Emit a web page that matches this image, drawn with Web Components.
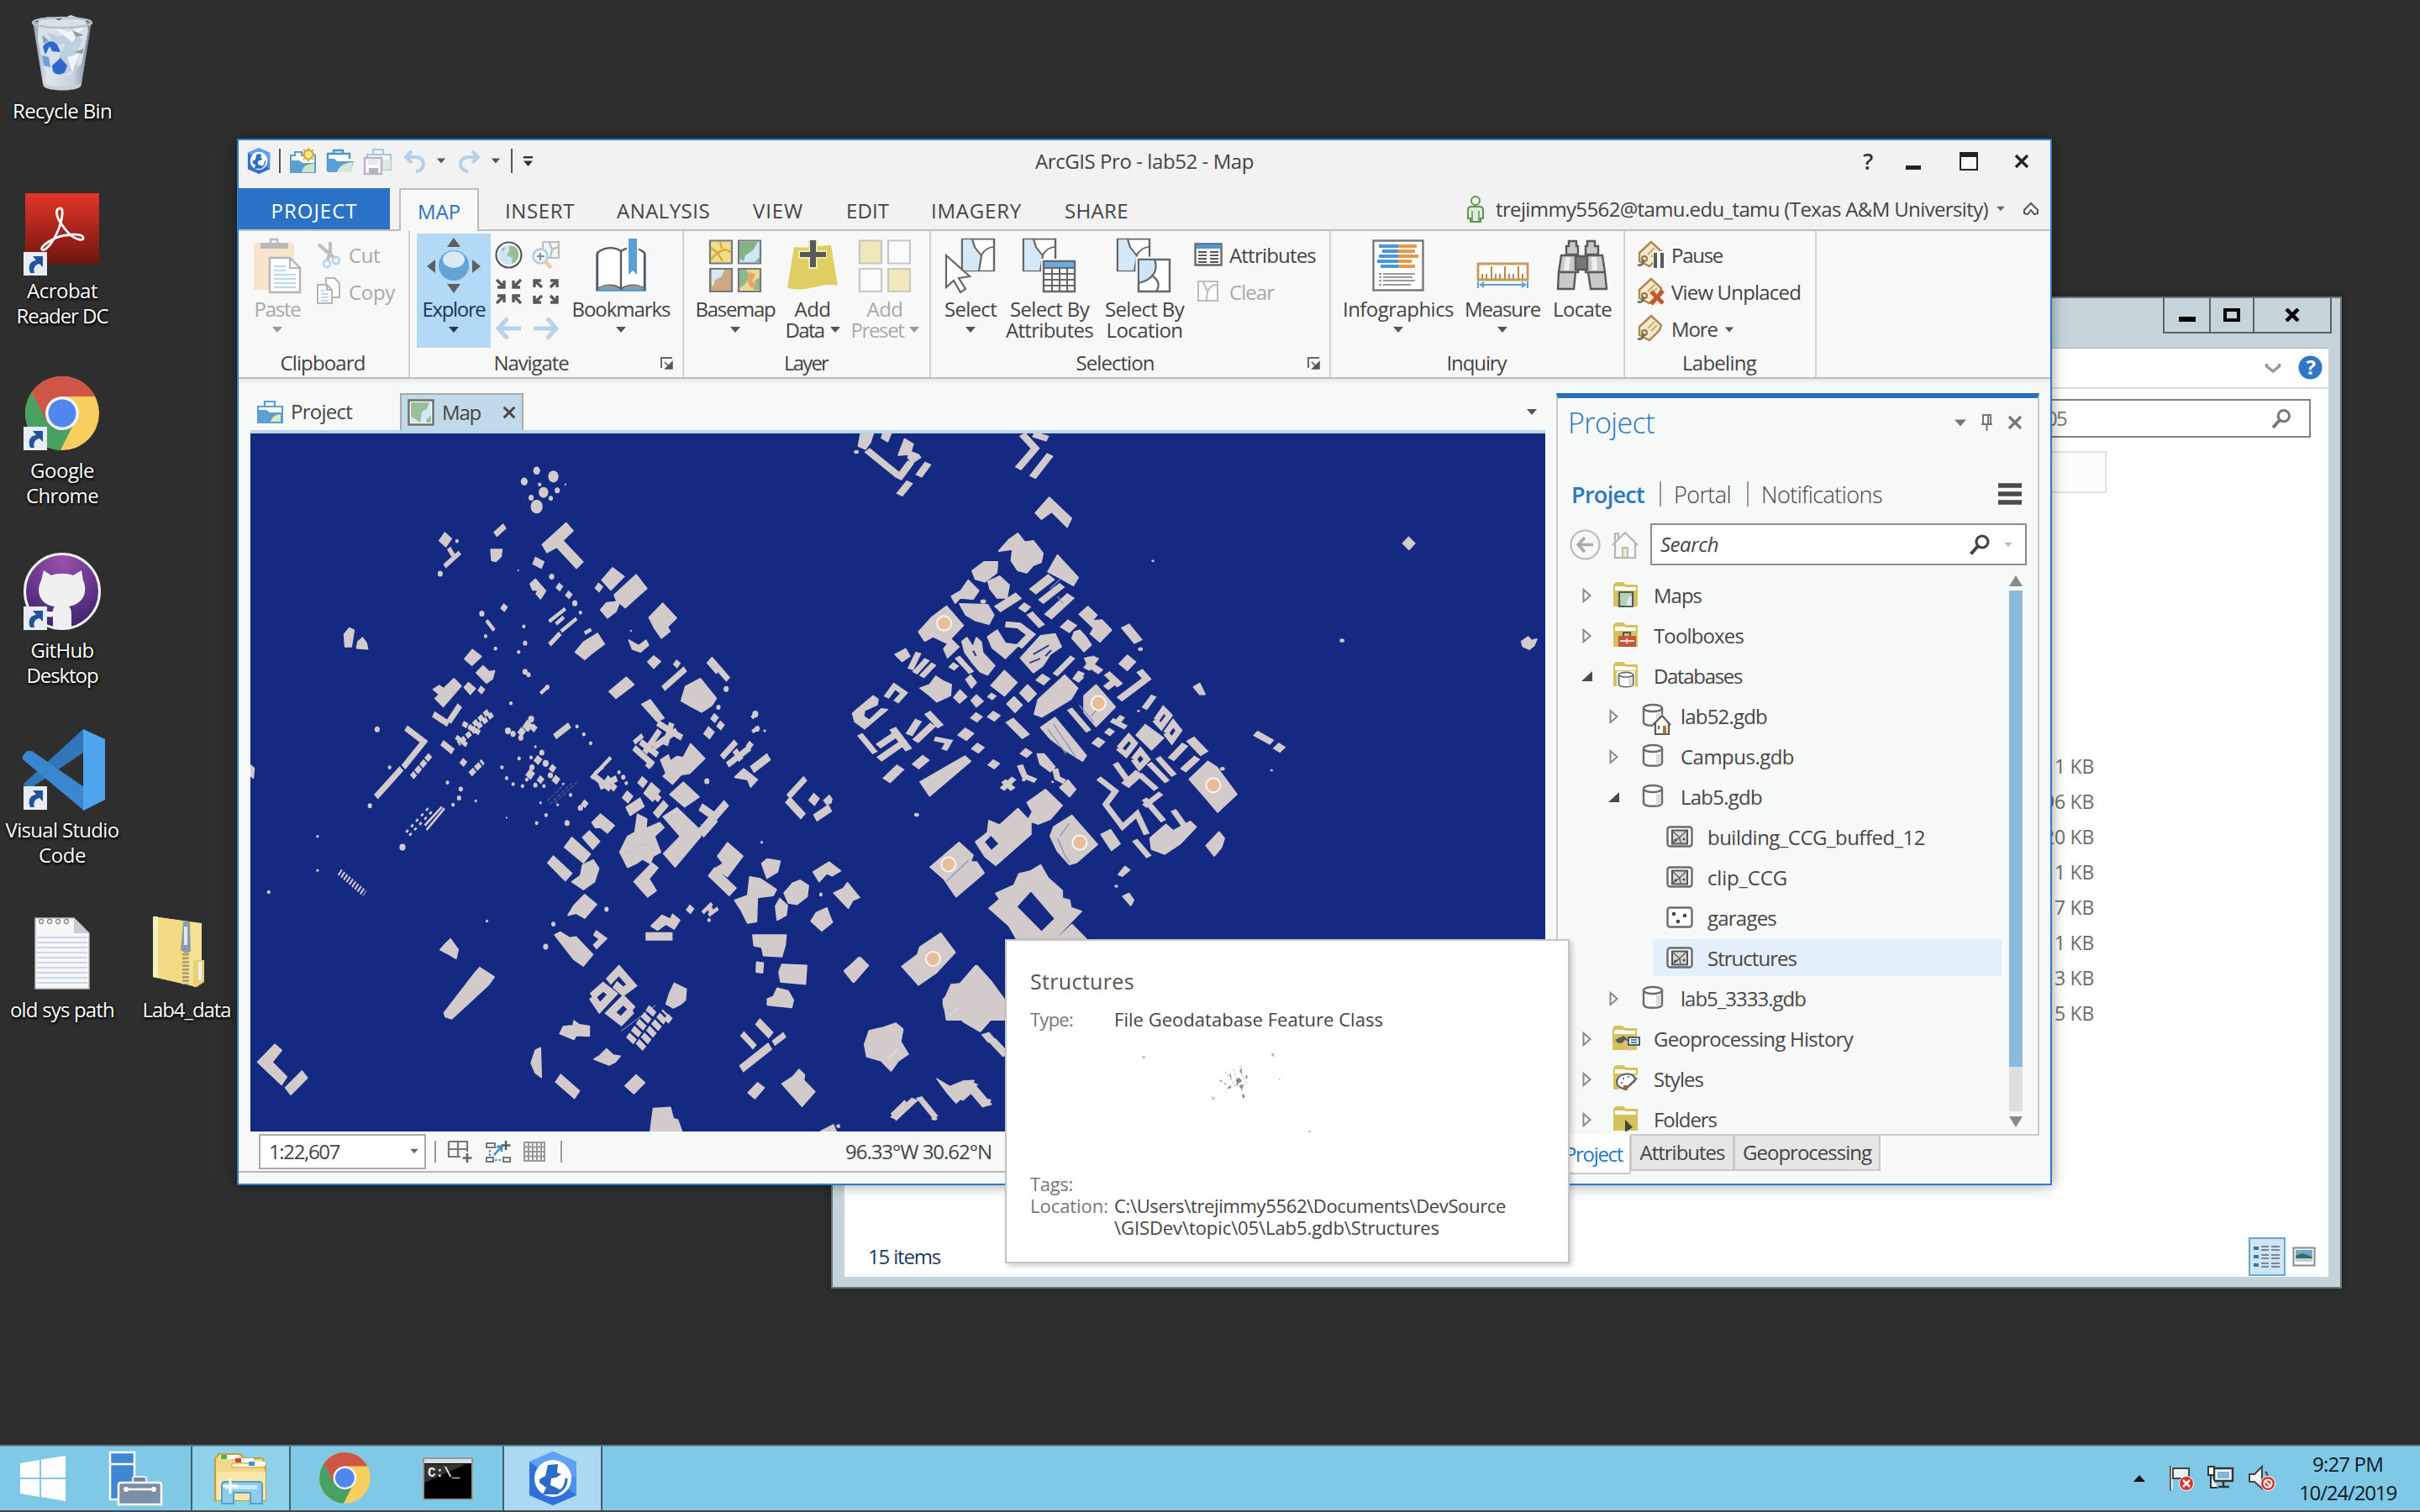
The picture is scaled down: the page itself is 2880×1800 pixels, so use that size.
<!DOCTYPE html>
<html lang="en">
<head>
<meta charset="utf-8">
<title>Desktop</title>
<style>
html,body{margin:0;padding:0}
body{width:2880px;height:1800px;overflow:hidden;background:#2e2e2e;font-family:"Open Sans","Noto Sans",sans-serif;font-size:24px;color:#444}
</style>
</head>
<body>
<desk-top></desk-top>
<script>
const BASE = `*{box-sizing:border-box}:host{display:block;line-height:1}.r{display:flex;align-items:center}svg{display:block}`;
const define = (name, css, html, after) => customElements.define(name, class extends HTMLElement {
  connectedCallback() {
    if (this.shadowRoot) return;
    const root = this.attachShadow({ mode: 'open' });
    root.innerHTML = `<style>${BASE}${css}</style>` + (typeof html === 'function' ? html(this) : html);
    if (after) after(this, root);
  }
});

/* ---------- icons ---------- */
const folder = '<path d="M1 29V3l3-3h9l3 3h14v26z" fill="#d6c25a"/><path d="M3 5h11l3 1h11v4H3z" fill="#fdfdf6"/>';
const chrome = id => `<clipPath id="k${id}"><circle cx="44" cy="44" r="44"/></clipPath><g clip-path="url(#k${id})"><rect width="88" height="88" fill="#f8cf5e"/><path d="M0 0H88V24H44L25 54 8 20z" fill="#cf5546"/><path d="M0 12L8 20 26 54 44 62 57 58 42 88H0z" fill="#48a162"/></g><circle cx="44" cy="44" r="20" fill="#f3f3f3"/><circle cx="44" cy="44" r="16.5" fill="#5087ee"/>`;
const hexGlobe = '<path d="M30 0L58 12V52L30 64 2 52V12z" fill="#4a90ec"/><path d="M2 12L30 32 58 52 30 64 2 52z" fill="#2f70dc"/><path d="M30 0L58 12V30L30 32 2 12z" fill="#5fa2f2"/><circle cx="30" cy="32" r="22" fill="#fff"/><path d="M24 16l12-1-1 10 5 2-6 4-6 1-1 8 11 5-2 6H18l4-8-8-6v-4l7-4z" fill="#2c6bc6"/><path d="M46 32c0 8-4 14-11 17" stroke="#2c6bc6" stroke-width="3" fill="none"/>';
const parcel = '<path d="M1 1h38v54H1z" fill="#fff" stroke="#666" stroke-width="2.4"/><path d="M2 2h11l3 14 8 14-3 24H2z" fill="#d5e8f7"/><path d="M13 1l3 14 8 14-3 26M24 28c3-8 8-13 15-14" fill="none" stroke="#666" stroke-width="2.2"/>';
const tag = '<path d="M3 15L17 2l12 11-2 6-12 12-12-6z" fill="#f7e9c6" stroke="#a98a55" stroke-width="2.4"/><path d="M13 17l8-8M17 20l7-7" stroke="#c9ad78" stroke-width="2"/><circle cx="9" cy="22" r="3" fill="none" stroke="#8a7449" stroke-width="2"/><path d="M8 23c0 6-4 8-7 6" fill="none" stroke="#666" stroke-width="2.4"/>';
const cyl = '<path d="M2 6v17c0 5 22 5 22 0V6" fill="#fafafa" stroke="#6b6b6b" stroke-width="2.4"/><path d="M17 12h6v12l-6 2z" fill="#ddd"/><ellipse cx="13" cy="6" rx="11" ry="4" fill="#fff" stroke="#6b6b6b" stroke-width="2.4"/>';
const arrIn = '<path d="M2 2l9 9M3 11h8V3M31 2l-9 9M30 11h-8V3M2 30l9-9M3 21h8v8M31 30l-9-9M30 21h-8v8" fill="none" stroke="#58595b" stroke-width="3.4"/>';
const arrOut = '<path d="M12 11L3 3M3 11V3h8M22 11l8-8M22 3h8v8M12 21l-9 8M3 21v8h8M22 21l8 8M30 21v8h-8" fill="none" stroke="#58595b" stroke-width="3.4"/>';
const poly = '<rect x="1.5" y="1.5" width="29" height="23" rx="3" fill="#fff" stroke="#6b6b6b" stroke-width="2.4"/><path d="M7 5.500h18v16H7z" fill="#d8d8d8" stroke="#555" stroke-width="2.2"/><path d="M8 7l8 7 8-8M16 14l1 7M8 20l8-6" stroke="#666" stroke-width="1.6" fill="none"/><circle cx="11" cy="17" r="1.500" fill="#444"/><circle cx="21" cy="16" r="1.500" fill="#444"/>';
const ICONS = {
  logo: [28, 31, `<g transform="scale(.47 .485)">${hexGlobe}</g>`],
  newp: [31, 30, '<path d="M1 8h5V4h8v4h16v20H1z" fill="#fff" stroke="#5a9ccc" stroke-width="2"/><path d="M1 14h10l4 3h15v12H1z" fill="#5ba0d4"/><path d="M14 28c2-8 7-10 15-10v10z" fill="#cfe3c6"/><circle cx="22" cy="7" r="5.500" fill="#fae58c" stroke="#d1a929" stroke-width="2"/><path d="M22-1v4M22 12v4M14 7h4M27 7h4M16 1l3 3M28 1l-3 3M16 13l3-3M28 13l-3-3" stroke="#d1a929" stroke-width="1.500"/>'],
  openp: [33, 29, '<path d="M1 27V6h26v6" fill="#fff" stroke="#4c94c9" stroke-width="2.4"/><path d="M8 6V2h11v4" fill="none" stroke="#4c94c9" stroke-width="2.4"/><path d="M1 12h8l3 3h20l-4 13H1z" fill="#5ba0d4"/><path d="M12 28c3-8 8-11 19-12l-3 12z" fill="#d6e8d8"/>'],
  savep: [34, 32, '<g opacity=".5"><path d="M4 8h28v18H4z" fill="#fff" stroke="#5ba0d4" stroke-width="2"/><path d="M11 8V2h12v6" fill="none" stroke="#5ba0d4" stroke-width="2"/><path d="M22 14h10v12H22z" fill="#c9dfd0"/><path d="M1 12h20v19H1z" fill="#fff" stroke="#8e6fb0" stroke-width="2.4"/><path d="M5 13h12v7H5z" fill="#e6dcf0"/><path d="M6 24h11v7H6z" fill="#777"/></g>'],
  undo: [27, 28, '<path d="M10 2L3 9l7 7M3 9h12c6 0 9 4 9 8s-3 9-9 9" fill="none" stroke="#b5d0e8" stroke-width="4"/>'],
  redo: [27, 28, '<path d="M17 2l7 7-7 7M24 9H12c-6 0-9 4-9 8s3 9 9 9" fill="none" stroke="#b5d0e8" stroke-width="4"/>'],
  dn: [12, 7, '<path d="M0 0h12L6 7z" fill="currentColor"/>'],
  qat: [11, 12, '<path d="M0 0h11v2.500H0zM0 5.500h11L5.500 12z" fill="#333"/>'],
  min: [18, 22, '<path d="M0 16h18v5H0z" fill="#222"/>'],
  max: [22, 22, '<path d="M1 1h20v20H1z" fill="#f8f8f8" stroke="#222" stroke-width="2"/><path d="M0 0h22v6H0z" fill="#222"/>'],
  x: [18, 18, '<path d="M2 2l14 14M16 2L2 16" stroke="currentColor" stroke-width="3.200"/>'],
  user: [22, 32, '<circle cx="11" cy="6" r="5" fill="#eef6ea" stroke="#5d9455" stroke-width="2"/><path d="M2 17q0-4 4-4h10q4 0 4 4v10h-3v4H5v-4H2z" fill="#dcecd6" stroke="#5d9455" stroke-width="2"/><path d="M7 18v12M15 18v12" stroke="#5d9455" stroke-width="1.500"/>'],
  collapse: [20, 17, '<path d="M2 10L10 2l8 8v4l-4 1-4-5-4 5-4-1z" fill="#fff" stroke="#555" stroke-width="2"/>'],
  paste: [58, 66, '<rect x="1" y="6" width="48" height="56" rx="3" fill="#f8e4cd"/><path d="M9 6h33v7H9z" fill="#b9b9b9"/><path d="M21 6V2h8v4" fill="none" stroke="#b9b9b9" stroke-width="2.500"/><path d="M20 24h24l12 12v29H20z" fill="#fff" stroke="#b5b5b5" stroke-width="2.400"/><path d="M44 24v12h12" fill="none" stroke="#b5b5b5" stroke-width="2"/><path d="M25 34h14M25 39h14M25 44h26M25 49h26M25 54h26M25 59h26" stroke="#b9d7ee" stroke-width="2"/>'],
  cut: [28, 32, '<path d="M2 4L21 20M16 1V14L12 24" stroke="#bdbdbd" stroke-width="4" fill="none"/><circle cx="23" cy="23" r="4" fill="none" stroke="#b5d3ea" stroke-width="2.600"/><circle cx="12" cy="27" r="4" fill="none" stroke="#b5d3ea" stroke-width="2.600"/>'],
  copy: [29, 33, '<path d="M11 1h10l6 6v17H11z" fill="#fff" stroke="#b5b5b5" stroke-width="2"/><path d="M1 9h11l6 6v16H1z" fill="#fff" stroke="#b5b5b5" stroke-width="2"/><path d="M12 9v6h6" fill="none" stroke="#b5b5b5" stroke-width="2"/><path d="M5 16h4M5 20h9M5 24h9M5 28h9" stroke="#b9d7ee" stroke-width="1.800"/>'],
  explore: [66, 66, '<path d="M33 0l8 11H25zM33 66l8-11H25zM1 34l10-8v16zM65 34l-10-8v16z" fill="#5f5f61"/><circle cx="33" cy="33" r="18" fill="#64a3d5"/><ellipse cx="33" cy="26" rx="13" ry="10" fill="#d9e9f6"/>'],
  globe: [33, 33, '<circle cx="16.500" cy="16.500" r="15" fill="#fff" stroke="#58595b" stroke-width="2.200"/><circle cx="16.500" cy="16.500" r="12" fill="#cde5f5"/><path d="M17 6c7-2 12 4 11 12-1 5-5 9-8 8l1-6-7-3 3-5zM7 10l5-3-1 5z" fill="#98bf96"/>'],
  zoomsel: [33, 33, '<path d="M13 1h19v19H18M13 1v8M21 2l3 8 7-3M24 10l-2 9" fill="#f2f2f2" stroke="#bcbcbc" stroke-width="2.200"/><circle cx="10" cy="18" r="8.500" fill="#fafafa" stroke="#a9cfea" stroke-width="2.600"/><path d="M6 18h9M10 14v9" stroke="#8a8a8a" stroke-width="2"/><path d="M16 24l7 8" stroke="#efc9a2" stroke-width="4.400"/>'],
  arrin: [33, 33, arrIn], arrout: [33, 33, arrOut],
  left: [33, 28, '<path d="M31 14H4M15 2L4 14l11 12" fill="none" stroke="#b7d2ea" stroke-width="5"/>'],
  right: [33, 28, '<path d="M2 14h27M18 2l11 12-11 12" fill="none" stroke="#b7d2ea" stroke-width="5"/>'],
  book: [62, 64, '<path d="M1 18h4v42h52V18h4v45H1z" fill="#5ba0d4"/><path d="M3 17C12 9 24 10 31 15V60C22 54 12 55 3 60zM31 15C38 10 50 9 59 17V60C50 54 40 55 31 60" fill="#fff" stroke="#58595b" stroke-width="2.400"/><path d="M3 60C12 53 24 55 31 61 38 55 50 53 59 60z" fill="#999"/><path d="M38 8h14v14H38z" fill="#f8f8f8"/><path d="M40 0h10v43l-5-5-5 5z" fill="#5ba0d4"/>'],
  basemap: [64, 63, '<g stroke="#77787a" stroke-width="2.200"><path d="M2 1.500h26v27H2z" fill="#f0dd8a"/><path d="M36 1.500h26v27H36z" fill="#cfe6f6"/><path d="M2 35h26v27H2z" fill="#cba981"/><path d="M36 35h26v27H36z" fill="#f0d795"/></g><path d="M37 3h22l-6 10-9 6-2 7-5-3zM55 27l6-6v6z" fill="#86b383"/><path d="M3 10l8 6 6 10M3 24l8-8 8-4 8 3M14 3l2 8" stroke="#d8a53a" stroke-width="2.200" fill="none"/><path d="M4 36h15l-3 8-8 4-2 8-2-2z" fill="#d5e8f7"/><path d="M37 36h8l4 8-6 10-6 4zM54 60l2-12 5-2v14z" fill="#8cb98a"/><path d="M48 38l8 4-4 8 6 3-6 6-6-8z" fill="#e9a56f"/>'],
  adddata: [60, 60, '<path d="M8 8c12 2 30-2 44-2l8 48c-14-3-26 2-38 4-8 1-16 1-22-2z" fill="#dfcf62"/><path d="M25 0h11v12h11v10H36v12H25V22H13V12h12z" fill="#f1eaa9"/><path d="M27 0h7v32h-7zM15 14h31v6H15z" fill="#58595b"/>'],
  preset: [64, 63, '<g stroke="#c6c6c6" stroke-width="2.200"><path d="M2 1.500h26v27H2zM36 35h26v27H36z" fill="#f0e8b9"/><path d="M36 1.500h26v27H36zM2 35h26v27H2z" fill="#fbfbfb"/></g>'],
  select: [62, 66, `<g transform="translate(20 1) scale(1 .7)">${parcel}</g><path d="M2 21v38l9-8 8 14 6-4-8-13 13-2z" fill="#fff" stroke="#666" stroke-width="2.200"/>`],
  selattr: [64, 66, `<g transform="translate(0 1) scale(1 .7)">${parcel}</g><path d="M24 27h39v38H24z" fill="#fff" stroke="#f8f8f8" stroke-width="4"/><path d="M25 28h37v36H25z" fill="#fff" stroke="#666" stroke-width="2.400"/><path d="M26 29h35v6H26z" fill="#6aaae0"/><path d="M25 36h37M25 43h37M25 50h37M25 57h37M35 36v28M44 36v28M53 36v28" stroke="#666" stroke-width="2"/>`],
  selloc: [66, 66, `<g transform="translate(0 1) scale(1 .7)">${parcel}</g><path d="M25 25h39v40H25z" fill="#fff" stroke="#f8f8f8" stroke-width="5"/><path d="M26 26h37v38H26z" fill="#fff" stroke="#666" stroke-width="2.400"/><path d="M27 27h18c4 12 0 22-18 26z" fill="#cfe4f6"/><path d="M45 26c5 13-2 24-19 28M43 46c6 4 9 10 4 18" fill="none" stroke="#666" stroke-width="2.200"/>`],
  attr: [34, 28, '<path d="M1.500 1.500h31v25h-31z" fill="#fff" stroke="#666" stroke-width="2.400"/><path d="M2 2h30v5H2z" fill="#4f97d2"/><path d="M5 11h10M5 15h10M5 19h10M5 23h10M19 11h10M19 15h10M19 19h10M19 23h10" stroke="#555" stroke-width="2"/>'],
  clear: [26, 25, '<path d="M1 1h23v23H1zM7 2l5 11M12 13c2-5 6-8 11-8M12 13l-1 10" fill="#fbfbfb" stroke="#bcbcbc" stroke-width="2"/>'],
  info: [62, 62, '<path d="M1.500 1.500h59v59h-59z" fill="#fff" stroke="#77787a" stroke-width="2.400"/><path d="M8 8h24M12 14h20M8 20h24M6 26h26M10 32h22" stroke="#4a96d2" stroke-width="4"/><path d="M31 8h22M31 14h20M31 20h24M31 26h16M31 32h20" stroke="#e39a4c" stroke-width="4"/><path d="M8 41h3M13 41h38M8 45h3M13 45h35M8 49h3M13 49h38M8 54h3M13 54h33" stroke="#999" stroke-width="1.800"/>'],
  measure: [63, 60, '<path d="M2 28h59v19H2z" fill="#fff" stroke="#c19a5e" stroke-width="2.800"/><path d="M7 46v-6M12 46v-6M18 46V31M23 46v-6M28 46v-6M34 46V31M39 46v-6M44 46v-6M50 46V31M55 46v-6" stroke="#b88b49" stroke-width="2"/><path d="M2 49v8M61 49v8M4 53h55M9 50l-4 3 4 3M54 50l4 3-4 3" stroke="#5ba0d4" stroke-width="2" fill="none"/>'],
  binoc: [60, 60, '<g fill="#c9c9c9" stroke="#58595b" stroke-width="2.400"><path d="M14 1h9v6h2v10H11V7h3zM36 1h9v6h4v10H34V7h2z"/><path d="M5 18h20v20H2zM34 18h20l3 20H34zM2 38h20l-2 20H1zM37 38h20l2 20H40z"/><path d="M22 19h14v16H22z" fill="#777"/></g><path d="M10 20h6l-2 16H8zM41 20h6l1 16h-6z" fill="#eee"/>'],
  pause: [33, 33, tag + '<path d="M19 13h14v20H19z" fill="#f8f8f8"/><path d="M22 15v18M30 15v18" stroke="#58595b" stroke-width="4"/>'],
  unplaced: [33, 33, tag + '<path d="M17 17l14 14M31 16L17 32" stroke="#c4562f" stroke-width="5"/>'],
  more: [33, 33, tag],
  launch: [15, 15, '<path d="M1 13V1h13" fill="none" stroke="#666" stroke-width="2"/><path d="M5 6l5 5M14 6v8H6z" fill="#555" stroke="#555" stroke-width="1.500"/>'],
  docproj: [31, 28, '<path d="M1 8h29v19H1z" fill="#fff" stroke="#5ba0d4" stroke-width="2"/><path d="M9 8V2h12v6" fill="none" stroke="#5ba0d4" stroke-width="2.200"/><path d="M1 12h10l4 3h15v12H1z" fill="#5ba0d4"/><path d="M16 26c2-6 5-8 12-9v9z" fill="#dbe8c4"/>'],
  docmap: [32, 32, '<path d="M1.500 1.500h29v29h-29z" fill="#fff" stroke="#6e6e6e" stroke-width="2.400"/><path d="M4 4h24v24H4z" fill="#d3e8f5"/><path d="M4 4h22l-3 8-6 3-2 13-7-5-4-2zM22 25l6-6v9h-5z" fill="#98bf96"/>'],
  pin: [15, 20, '<path d="M3 12V1h9v11M1 12h13M7.500 12v8M9 2v10" fill="none" stroke="#777" stroke-width="2"/>'],
  burger: [28, 26, '<path d="M0 3h28M0 13h28M0 23h28" stroke="#4a4a4a" stroke-width="5.500"/>'],
  back: [37, 37, '<circle cx="18.500" cy="18.500" r="17" fill="none" stroke="#bbb" stroke-width="2.200"/><path d="M28 18.500H11M18 10l-8 8.500 8 8.500" fill="none" stroke="#aaa" stroke-width="3.400"/>'],
  home: [32, 33, '<path d="M4 15v17h24V15M1 17L16 2l15 15M4 14V3h4v7" fill="none" stroke="#b5b5b5" stroke-width="2.200"/><path d="M13 20h6v12h-6z" fill="#f3e3cf" stroke="#b5b5b5" stroke-width="1.800"/>'],
  mag: [24, 25, '<circle cx="15" cy="9" r="7" fill="none" stroke="currentColor" stroke-width="3.200"/><path d="M10 14L1.500 23.500" stroke="currentColor" stroke-width="4"/>'],
  fmap: [32, 30, folder + '<path d="M8 12h16v17H8z" fill="#b4d3b4" stroke="#58595b" stroke-width="2.200"/><path d="M16 28l2-9 5-3v12z" fill="#d5e8f7"/>'],
  ftool: [32, 30, folder + '<path d="M7 16h21v13H7z" fill="#c0573a"/><path d="M13 16v-4h8v4" stroke="#58595b" stroke-width="2.200" fill="none"/><path d="M9 22h17M17 19v6" stroke="#f3dcd4" stroke-width="2"/>'],
  fdb: [32, 31, folder + '<path d="M5 11h22v20H5z" fill="#f7f9f8"/><g transform="translate(6 11) scale(.78 .7)">' + cyl + '</g>'],
  fgp: [34, 30, folder + '<path d="M4 17l10-5 6 5-4 3-8 1z" fill="#58595b"/><path d="M15 18l8 11" stroke="#e0b98a" stroke-width="4.500"/><path d="M20 14h13v9H20z" fill="#fff" stroke="#58595b" stroke-width="2"/><path d="M23 17h7M23 20h7" stroke="#3b8ad0" stroke-width="2"/>'],
  fsty: [32, 32, folder + '<path d="M8 29l-4-8 4-9h22v17z" fill="#f7f9f8"/><path d="M5 19c2-10 20-12 22-2 0 5-5 3-7 7-3 6-15 5-15-5z" fill="#fff" stroke="#58595b" stroke-width="2"/><path d="M12 16h2M18 14h2M10 21h2" stroke="#3b8ad0" stroke-width="2"/><path d="M29 15l-9 10" stroke="#666" stroke-width="2.500"/><path d="M13 24h5v6h-5z" fill="#a5633a"/>'],
  ffold: [32, 30, folder + '<path d="M15 16l9 9-9 6z" fill="#444"/>'],
  gdb: [26, 29, cyl],
  gdbh: [26, 29, cyl + '<path d="M13 24L24 13l10 11v14H14z" fill="#f7f9f8"/><path d="M16 24v13h16V24M13 26l11-11 10 11" fill="#fff" stroke="#58595b" stroke-width="2.200"/><path d="M25 27h4v10h-4z" fill="#a8742f"/><path d="M20 27v4" stroke="#58595b" stroke-width="2"/>'],
  poly: [32, 26, poly],
  pts: [32, 26, '<rect x="1.500" y="1.500" width="29" height="23" rx="3" fill="#fff" stroke="#6b6b6b" stroke-width="2.400"/><circle cx="9" cy="9" r="2.300" fill="#444"/><circle cx="22" cy="11" r="2.300" fill="#444"/><circle cx="14" cy="18" r="2.300" fill="#444"/>'],
  closed: [11, 18, '<path d="M1.500 2v14l8-7z" fill="#fff" stroke="#888" stroke-width="2"/>'],
  opened: [13, 14, '<path d="M13 1v12H0z" fill="#4a4a4a"/>'],
  sb1: [32, 28, '<path d="M2 2h22v12M2 2v18h14M13 2v18M2 11h22" fill="none" stroke="#777" stroke-width="2.200"/><path d="M24 16v11M18.500 21.500h11" stroke="#666" stroke-width="2.600"/>'],
  sb2: [32, 28, '<path d="M2 4h10v5H2zM2 21h8v5H2zM22 21h8v5h-8z" fill="#fff" stroke="#777" stroke-width="2"/><path d="M11 18l8-9M14 8h6v6" fill="none" stroke="#3b8ad0" stroke-width="2.600"/><path d="M25 1v11M19.500 6.500h11" stroke="#58595b" stroke-width="2.400"/><path d="M6 12v7M12 24h9" stroke="#3b8ad0" stroke-width="2.200" stroke-dasharray="2.500 2"/>'],
  grid: [28, 26, '<path d="M2 2h24v22H2zM2 7.500h24M2 13h24M2 18.500h24M7 2v22M12 2v22M17 2v22M22 2v22" fill="none" stroke="#999" stroke-width="2"/>'],
  chev: [18, 13, '<path d="M1.500 2v3L9 11l7.500-6V2" fill="none" stroke="#999" stroke-width="3.500"/>'],
  help: [29, 29, '<circle cx="14.500" cy="14.500" r="14" fill="#3276c8"/>'],
  link: [28, 28, '<path d="M0 0h28v28H0z" fill="#e8edf5"/><path d="M8 25C4 15 10 10 15 10L11 5h12v13l-4-4c-5 1-8 5-6 11z" fill="#23529c"/>'],
  bin: [76, 90, '<defs><linearGradient id="bg" x1="0" x2="1"><stop offset="0" stop-color="#8f9aa5"/><stop offset=".25" stop-color="#dfe7ee"/><stop offset=".7" stop-color="#c5d1dd"/><stop offset="1" stop-color="#74808e"/></linearGradient></defs><path d="M3 8L15 82c3 8 43 8 46 0L73 8z" fill="url(#bg)"/><path d="M10 4l14-2 10 4 14-6 18 6 3 12-8 40-14 14-30-6-8-36z" fill="#d7e1ea"/><path d="M20 20l14 6 16-10 12 14-10 20 6 14-18 6-6-20 8-16-14 2z" fill="#c0cfdd"/><path d="M24 12l20 8 20-6-14 18zM44 50l14-4-8 22z" fill="#f2f6fa"/><path d="M50 18l14 6-10 2zM52 44l12-4-2 6zM14 24l8 6-6 4z" fill="#8d9dad"/><ellipse cx="38" cy="9" rx="35" ry="6" fill="none" stroke="#b8bfc6" stroke-width="2.500"/><path d="M15 80c8 7 40 7 46 0l-1 5c-6 6-38 6-44 0z" fill="#cfcfcd"/><path d="M15 38c4-8 12-9 17-3l4 9-10-1-3-6-5 10zM26 60l10-9 8 9-3 8c-5 4-11 3-14-1z" fill="#2f68cc"/><path d="M14 48l8 2 2 12-8-2z" fill="#6f9be0"/>'],
  acro: [88, 84, '<defs><linearGradient id="ag" x2="0" y2="1"><stop offset="0" stop-color="#e63527"/><stop offset="1" stop-color="#6f1511"/></linearGradient></defs><g transform="translate(0 -14)"><path d="M0 0h88v84H0z" fill="url(#ag)" transform="scale(1 1)"/><path d="M38 20c-3 8 8 22 16 30 8 6 16 7 15 3-1-6-22-4-32 0-12 5-19 12-17 14 5 4 18-16 22-31 3-10 3-18 0-18-2 0-4 1-4 2z" fill="none" stroke="#fff" stroke-width="2.800"/></g>'],
  chrome: [88, 88, chrome(1)],
  github: [92, 92, '<defs><radialGradient id="gg" cx=".5" cy=".1" r=".9"><stop offset="0" stop-color="#9a50ad"/><stop offset="1" stop-color="#3f2270"/></radialGradient></defs><circle cx="46" cy="46" r="44.500" fill="url(#gg)" stroke="#f2f2f2" stroke-width="3"/><path d="M24 21l9 6c8-3 18-3 26 0l10-6 2 12c6 14 0 28-17 31 3 3 3 6 3 12v12c-7 3-15 3-22 0V76c-12 3-17-7-20-12 8 2 11 7 20 6 0-2 0-4 2-6-17-2-23-17-16-31z" fill="#f0f0f2"/>'],
  vs: [98, 98, '<g transform="translate(2 2)"><path d="M0 66L72 0V28L10 70z" fill="#2f77b8"/><path d="M0 32l5-6 6 0L73 69V97L0 36z" fill="#3a87d0"/><path d="M72 0l26 12V84L72 97z" fill="#4ea6ee"/></g>'],
  note: [66, 86, '<path d="M1 1h46l18 18v66H1z" fill="#f7f7fa" stroke="#bbb" stroke-width="1.500"/><path d="M47 1v18h18z" fill="#c9ccd2"/><path d="M3 24h60M3 30h60M3 36h60M3 42h60M3 48h60M3 54h60M3 60h60M3 66h60M3 72h60M3 78h60" stroke="#b9cddb" stroke-width="1.600"/><g fill="#fff" stroke="#888" stroke-width="1.300"><circle cx="8" cy="5" r="2.500"/><circle cx="18" cy="5" r="2.500"/><circle cx="28" cy="5" r="2.500"/><circle cx="38" cy="5" r="2.500"/></g>'],
  zip: [62, 88, '<g transform="translate(-9 1)"><path d="M0 0l58 8v68l-6 8L0 72z" fill="#f6e294"/><path d="M0 0l40 6v74L0 72z" fill="#f3db83"/><path d="M0 0h6l0 73-6-1z" fill="#fbf0b8"/><path d="M48 52h13v26l-9 6h-4z" fill="#ecd06f"/><path d="M54 54h4v22h-4z" fill="#e9f1f8"/><path d="M36 6h8l1 36-6 2-6-4z" fill="#8f9aa8"/><path d="M37 12h4v22h-4z" fill="#dfe6ee"/><path d="M39 44v37" stroke="#a59c74" stroke-width="8" stroke-dasharray="2.500 2"/></g>'],
  win: [54, 54, '<path d="M0 9L23 5V26H0zM25 4.500L54 0V26H25zM0 28h23v21L0 45zM25 28h29v26l-29-5z" fill="#fff"/>'],
  server: [66, 66, '<path d="M2 2h29v56H2z" fill="#3f87d2" stroke="#fff" stroke-width="2.500"/><path d="M2 16h29" stroke="#fff" stroke-width="2.500"/><path d="M29 39v-6q0-2 3-2h10q3 0 3 2v6" fill="#72889f" stroke="#e6f2f8" stroke-width="2"/><path d="M12 41q0-3 3-3h45q3 0 3 3v23H12z" fill="#7a90a6" stroke="#fff" stroke-width="2.500"/><path d="M19 46h37" stroke="#fff" stroke-width="2.400"/><circle cx="21" cy="46" r="3" fill="#fff"/><circle cx="54" cy="46" r="3" fill="#fff"/>'],
  files: [66, 60, '<path d="M2 56V6l5-5h25l4 5h22l4 6v44z" fill="#f2d98a" stroke="#c79d42" stroke-width="2"/><path d="M4 22h58v34H4z" fill="#f8e7a8"/><path d="M22 8h20M22 12h38v5H22z" stroke="#c79d42" fill="#fdf4cc"/><path d="M8 2h22v5H8z" fill="#fff"/><path d="M9 2h7v5H9z" fill="#49b83b"/><path d="M26 6h22v5H26z" fill="#fff"/><path d="M26 6h7v5h-7z" fill="#c8462f"/><path d="M42 10h20v5H42z" fill="#fff"/><path d="M42 10h7v5h-7z" fill="#3c92dc"/><path d="M10 60V38q0-4 4-4h40q4 0 4 4v22H44V47H24v13z" fill="#8fcdee" stroke="#5a9fc8" stroke-width="2"/><path d="M14 38h38v5H14z" fill="#c8eafa"/><path d="M20 30v18M11 39h18" stroke="#fff" stroke-width="3"/>'],
  chromes: [62, 62, `<g transform="scale(.69)">${chrome(2)}</g>`],
  cmd: [60, 51, '<path d="M1 1h58v49H1z" fill="#000" stroke="#999" stroke-width="2"/><path d="M2 2h56v5H2z" fill="#d8dce4"/><path d="M2 8h50L2 30z" fill="#4a4a4a" opacity=".7"/>'],
  hex: [60, 64, hexGlobe],
  up: [14, 8, '<path d="M0 8L7 0l7 8z" fill="#111"/>'],
  flag: [34, 34, '<path d="M5 3v28" stroke="#fff" stroke-width="3"/><path d="M7 5h19v12H7z" fill="#e9f4f9" stroke="#444" stroke-width="2"/><path d="M4 2v30" stroke="#333" stroke-width="1.500"/><circle cx="23" cy="23" r="8.500" fill="#d8322b" stroke="#fff"/><path d="M19 19l8 8M27 19l-8 8" stroke="#fff" stroke-width="2.600"/>'],
  net: [34, 34, '<path d="M9 5h22v15H9z" fill="#e9f4f9" stroke="#333" stroke-width="2.400"/><path d="M13 9h14v8H13z" fill="#7fb8d6"/><path d="M20 20v6M14 27h13" stroke="#333" stroke-width="2.600"/><path d="M2 3h7v10H2zM5 13v15h8" fill="#fff" stroke="#333" stroke-width="2"/>'],
  vol: [34, 34, '<path d="M2 12h6l9-9v26l-9-8H2z" fill="#f5f5f5" stroke="#444" stroke-width="2"/><path d="M21 9c4 4 4 11 0 15" fill="none" stroke="#444" stroke-width="2"/><circle cx="24" cy="23" r="8.500" fill="#d8322b" stroke="#fff"/><circle cx="24" cy="23" r="4.500" fill="none" stroke="#fff" stroke-width="2"/><path d="M21 20l6 6" stroke="#fff" stroke-width="2"/>'],
  list: [34, 30, '<path d="M1 5h6M1 15h6M1 25h6" stroke="#3b75a8" stroke-width="4"/><path d="M10 3h9M10 7h9M10 13h9M10 17h9M10 23h9M10 27h9M22 3h10M22 7h10M22 13h10M22 17h10M22 23h10M22 27h10" stroke="#666" stroke-width="1.600"/>'],
  large: [28, 24, '<path d="M1.500 1.500h25v21h-25z" fill="#fff" stroke="#888" stroke-width="2"/><path d="M4 4h20v7H4z" fill="#67a9d8"/><path d="M4 11l8-3 12 4v3H4z" fill="#3f6d4a"/><path d="M4 14h20v4H4z" fill="#b5d0e2"/>'],
};
define('ui-icon', `:host{flex:none}svg{overflow:visible}`, el => {
  const [w, h, body] = ICONS[el.getAttribute('n')];
  return `<svg width="${w}" height="${h}" viewBox="0 0 ${w} ${h}">${body}</svg>`;
});
const ic = (n, s = '') => `<ui-icon n="${n}" style="${s}"></ui-icon>`;
const tx = (t, w, s = '') => `<fit-text w="${w}" style="${s}">${t}</fit-text>`;
const sp = w => `<i style="flex:none;width:${w}px"></i>`;

/* ---------- desktop shortcuts ---------- */
define('desk-icon', `:host{width:148px;height:214px;display:flex;flex-direction:column;align-items:center;color:#fff;text-shadow:1px 2px 3px #000,0 0 3px #000}
 .p{height:100px;display:flex;align-items:flex-end;justify-content:center;position:relative;width:96px}.l{position:absolute;left:2px;bottom:0}
 :host([n=acro]) .p ui-icon{margin-bottom:-6px}
 .t{margin-top:9px;display:flex;flex-direction:column;align-items:center;line-height:29.500px}`,
 el => `<div class="p">${ic(el.getAttribute('n'))}${el.hasAttribute('link') ? `<span class="l">${ic('link')}</span>` : ''}</div><div class="t"><slot></slot></div>`);

/* ---------- ribbon ---------- */
define('ribbon-button', `:host{flex:none;display:flex;flex-direction:column;align-items:center;height:132px}
 :host([on]){background:#b2d9f5;margin-top:-4px;padding-top:4px;height:136px;color:#1f3550}
 :host([off]){color:#a9a9a9}.i{height:68px;display:flex;align-items:center}.t{margin-top:5px;display:flex;flex-direction:column;align-items:center}
 .t ::slotted(*){height:25px;display:flex;align-items:center}`,
 el => `<div class="i">${ic(el.getAttribute('n'))}</div><div class="t"><slot></slot></div>`);
define('ribbon-row', `:host{display:flex;align-items:center;height:44px}:host([off]){color:#a9a9a9}.i{flex:none;display:flex;justify-content:center;margin-top:-3px}`,
 el => `<div class="i" style="width:${el.getAttribute('iw')}px">${ic(el.getAttribute('n'))}</div><slot></slot>`);
define('ribbon-group', `:host{flex:none;height:174px;border-right:2px solid #d2d2d2;display:flex;flex-direction:column;padding-top:7px}
 .b{display:flex;height:136px;align-items:flex-start}.l{height:28px;display:flex;align-items:center;justify-content:center;position:relative;padding-right:2px}
 :host([k]) .l{padding-right:36px}.k{position:absolute;right:11px;top:7px}`,
 el => `<div class="b"><slot></slot></div><div class="l">${tx(el.getAttribute('label'), el.getAttribute('lw'))}${el.hasAttribute('k') ? `<span class="k">${ic('launch')}</span>` : ''}</div>`);
const arrow = (s = '') => `<span>${ic('dn', 'color:#555;' + s)}</span>`;
const big = (n, w, ml, lines, flag = '') => `<ribbon-button n="${n}" ${flag} style="width:${w}px;margin-left:${ml}px">${lines}</ribbon-button>`;
const sm = (n, iw, gap, t, w, flag = '', tail = '') => `<ribbon-row n="${n}" iw="${iw}" ${flag}>${tx(t, w, `margin-left:${gap}px`)}${tail}</ribbon-row>`;

define('app-ribbon', `:host{background:#f8f8f8;height:176px;border-bottom:2px solid #bdbdbd;box-shadow:0 3px 5px #0001}.g{display:flex}
 .n{display:grid;grid-template-columns:33px 33px;grid-template-rows:44px 44px 44px;column-gap:11px;align-items:center;margin-left:5px;margin-top:-1px}`, `<div class="g">
 <ribbon-group label="Clipboard" lw="101" style="width:204px">${big('paste', 72, 10, tx('Paste', 55) + `<span>${ic('dn', 'color:#999')}</span>`, 'off')}
  <div style="margin-left:10px">${sm('cut', 30, 9, 'Cut', 37, 'off')}${sm('copy', 30, 9, 'Copy', 55, 'off')}</div></ribbon-group>
 <ribbon-group label="Navigate" lw="89" k style="width:326px">${big('explore', 88, 8, tx('Explore', 75) + `<span>${ic('dn', 'color:#1f3550')}</span>`, 'on')}
  <div class="n">${['globe', 'zoomsel', 'arrin', 'arrout', 'left', 'right'].map(n => ic(n)).join('')}</div>${big('book', 118, 14, tx('Bookmarks', 117) + arrow())}</ribbon-group>
 <ribbon-group label="Layer" lw="52" style="width:294px">${big('basemap', 96, 13, tx('Basemap', 95) + arrow())}
  ${big('adddata', 72, 8, tx('Add', 43) + `<span>${tx('Data', 46)}${ic('dn', 'margin-left:7px;color:#555')}</span>`)}
  ${big('preset', 86, 7, tx('Add', 43) + `<span>${tx('Preset', 63)}${ic('dn', 'margin-left:6px;color:#999')}</span>`, 'off')}</ribbon-group>
 <ribbon-group label="Selection" lw="93" k style="width:476px">${big('select', 64, 15, tx('Select', 62) + arrow())}
  ${big('selattr', 106, 9, tx('Select By', 94) + tx('Attributes', 104))}${big('selloc', 96, 12, tx('Select By', 94) + tx('Location', 91))}
  <div style="margin-left:11px">${sm('attr', 34, 8, 'Attributes', 103)}${sm('clear', 34, 8, 'Clear', 53, 'off')}</div></ribbon-group>
 <ribbon-group label="Inquiry" lw="71" style="width:350px">${big('info', 134, 13, tx('Infographics', 132) + arrow())}${big('measure', 92, 11, tx('Measure', 90) + arrow())}${big('binoc', 72, 13, tx('Locate', 70))}</ribbon-group>
 <ribbon-group label="Labeling" lw="88" style="width:228px"><div style="margin-left:14px">${sm('pause', 32, 9, 'Pause', 61)}${sm('unplaced', 32, 9, 'View Unplaced', 154)}${sm('more', 32, 9, 'More', 55, '', ic('dn', 'margin-left:8px;color:#555;transform:scale(.85)'))}</div></ribbon-group>
</div>`);

define('title-bar', `:host{display:flex;align-items:center;height:57px;background:#f2f2f2;padding:0 0 8px 10px;color:#444}
 .s{width:2px;height:29px;background:#555}b{font-weight:600;font-size:27px;color:#333}`,
 ic('logo') + sp(10) + '<i class="s"></i>' + sp(11) + ic('newp') + sp(13) + ic('openp') + sp(11) + ic('savep') + sp(13) + ic('undo') + sp(12) + ic('dn', 'color:#555;transform:scale(.85)') + sp(14) + ic('redo') + sp(12) + ic('dn', 'color:#555;transform:scale(.85)') + sp(12) + '<i class="s"></i>' + sp(13) + ic('qat') +
 sp(598) + tx('ArcGIS Pro - lab52 - Map', 260) + sp(725) + '<b>?</b>' + sp(39) + ic('min') + sp(46) + ic('max') + sp(43) + ic('x', 'color:#222'));

define('tab-strip', `:host{display:flex;height:51px;background:linear-gradient(#f2f2f2 49px,#bdbdbd 49px)}
 .p{width:180px;height:49px;background:#2a72c6;color:#fff;display:flex;align-items:center;justify-content:center;padding-top:4px}
 .m{margin-left:11px;width:95px;height:51px;border:2px solid #bdbdbd;border-bottom:0;background:#f8f8f8;color:#2a72c6;display:flex;align-items:center;justify-content:center;padding-top:2px}
 .r{height:49px;padding-top:4px}.u{padding-top:0}`,
 `<div class="p">${tx('PROJECT', 103)}</div><div class="m">${tx('MAP', 51)}</div><div class="r">${sp(31)}${tx('INSERT', 83)}${sp(50)}${tx('ANALYSIS', 111)}${sp(51)}${tx('VIEW', 60)}${sp(51)}${tx('EDIT', 51)}${sp(50)}${tx('IMAGERY', 108)}${sp(51)}${tx('SHARE', 76)}</div>
 <div class="r u">${sp(402)}${ic('user')}${sp(13)}${tx('trejimmy5562@tamu.edu_tamu (Texas A&amp;M University)', 586)}${sp(9)}${ic('dn', 'color:#666;transform:scale(.8)')}${sp(20)}${ic('collapse')}</div>`);

/* ---------- map canvas ---------- */
const MAP = [
 { t: 'translate(280 450) scale(.5102 .58675)',
  p: `716,338 772,294 788,310 764,330 811,373 796,386 750,343 727,354|596,348 622,348 620,362 608,372 598,370|688,418 700,408 724,432 712,448 702,438 706,430 694,430|855,410 880,385 907,403 876,430|884,440 935,399 960,427 910,466 896,456 888,474 868,487 852,470 866,456 890,454|997,457 1029,487 1008,505 1014,514 994,528 978,508 965,486|793,556 812,536 845,518 861,540 830,560 815,571|918,532 941,543 958,532 964,542 945,556 926,550|962,576 976,564 992,575 976,589|1085,610 1122,650 1112,664 1088,678 1060,665 1040,655 1050,626|872,636 912,607 930,622 888,650|535,570 553,551 574,565 552,583|562,598 578,584 592,596 605,594 600,610 586,619|462,632 476,624 486,630 510,610 527,625 485,667 466,650 476,642|534,628 544,618 560,630 548,642|256,545 254,520 266,507 277,512 271,545|283,548 286,535 297,527 306,538 309,550|729,984 742,970 785,1005 770,1020|768,952 785,932 828,966 812,984|810,932 826,919 850,940 834,956|832,902 852,885 884,908 868,923 852,912 840,912|785,1022 805,1010 810,988 835,978 848,995 838,1022 812,1038|776,1090 790,1070 815,1048 843,1068 815,1096 795,1086|745,1130 758,1124 780,1136 795,1134 834,1170 812,1193 790,1180|897,962 915,930 932,922 938,885 960,895 958,914 990,902 1000,912 978,930 992,962 975,970 968,985 950,976 935,985 915,993|930,1022 972,984 986,994 965,1016 982,1040 962,1053|998,890 1030,872 1080,914 1086,930 1026,992 999,965 1038,930|998,808 1018,790 1010,780 1030,768 1045,770 1062,742 1095,772 1060,802 1040,805 1020,824|1014,845 1045,820 1082,850 1048,870|1104,1010 1118,994 1168,1035 1152,1050|1125,970 1148,943 1184,970 1148,1012 1120,995 1138,985|1228,985 1240,976 1271,980 1265,1002 1240,1015|1165,1060 1195,1050 1200,1012 1225,1016 1262,1038 1255,1050 1218,1054 1216,1103 1195,1106 1180,1080|1280,1045 1300,1025 1318,1019 1337,1030 1334,1052 1310,1068 1290,1065|1260,1072 1270,1056 1288,1070 1285,1090 1264,1100|1348,1002 1385,982 1412,1000 1392,1010 1380,1005 1362,1022|1396,1045 1418,1036 1428,1024 1456,1054 1440,1060 1430,1076|1343,1102 1355,1085 1380,1075 1386,1090 1393,1104 1368,1122|970,1112 995,1090 1015,1098 1020,1088 1037,1100 1024,1118 1005,1108 985,1120|1207,1130 1285,1130 1283,1150 1275,1174 1232,1172 1228,1155 1210,1152|1216,1185 1232,1187 1230,1207 1215,1205|1268,1205 1275,1190 1333,1192 1330,1230 1272,1225|1241,1260 1255,1255 1264,1238 1290,1244 1302,1262 1298,1277 1241,1272|1421,1202 1458,1176 1477,1192 1443,1226|478,1160 490,1148 502,1138 520,1160 515,1178 500,1170|487,1288 556,1210 570,1196 604,1215 590,1232 505,1300 490,1296|52,1388 92,1352 108,1364 86,1388 120,1418 108,1434|757,1330 765,1316 788,1314 790,1304 802,1312 826,1315 826,1335 795,1334 790,1342|690,1390 700,1364 712,1359 714,1419 700,1410|837,1382 850,1375 866,1361 882,1374 898,1376 886,1388 872,1394|909,1436 935,1414 955,1430 930,1452|968,1529 975,1482 1015,1480 1022,1503 1032,1505 1042,1529|1275,1432 1300,1418 1315,1403 1328,1414 1326,1425 1352,1448 1322,1478|1165,810 1186,793 1218,815 1202,830 1195,815|35,785 44,792 42,812 35,806|948,662 968,653 1000,690 984,697|992,775 1010,765 1020,790 1004,800|1012,1250 1024,1228 1052,1240 1050,1262 1040,1270 1022,1278 1005,1270|1196,1450 1218,1430 1234,1440 1212,1462|1365,1529 1395,1515 1402,1529`,
  l: { 4: '488,873 446,917|482,870 442,908', 7: '732,494 770,468|748,499 766,485|760,514 796,488|815,518 830,510|830,812 876,770|838,803 858,788|712,640 728,627|586,492 604,512|1090,1085 1112,1066|1104,1090 1126,1076|1205,690 1215,680|1206,718 1222,708', 9: '488,382 524,354|498,345 508,360|733,541 758,518|515,728 540,745|990,690 965,665|930,740 950,725', 12: '606,318 629,300|398,710 440,738 392,790|328,850 388,792|462,682 497,702|498,698 524,664|482,740 508,758|745,728 780,704|838,808 875,834|850,830 890,812|1108,570 1150,612|998,630 1050,590|838,1125 858,1138 838,1155|930,750 975,785|945,738 985,765|955,760 990,715|985,700 1042,730|975,750 1030,715|1003,745 1018,700|1290,850 1330,812|1255,1350 1282,1332|1182,1330 1212,1358|1135,770 1168,738|1148,785 1200,750|1165,755 1180,775|1390,850 1375,862', 16: '696,370 718,380|1085,870 1118,890 1146,862|980,888 1005,862|957,1133 1020,1133|1180,1402 1248,1355|1218,1305 1250,1334|1205,795 1245,768|1352,893 1388,872|1288,855 1325,890|1105,572 1128,595|870,1225 895,1202 925,1232 905,1245 885,1230|832,1255 858,1235 880,1250 850,1278 832,1255|925,1282 900,1305 875,1288 905,1262 928,1282', 21: '1085,925 1118,892|122,1448 163,1412|752,1420 798,1455|915,880 950,860' , 19: '1535,1500 1568,1472' },
  d: { 5: ['450,873 395,925|458,880 402,932', '7 9'], 12: ['455,765 412,810|548,804 578,778', '14 3'], 11: ['600,682 520,742|590,676 545,712|570,720 530,700', '12 4'], 14: ['243,1002 302,1046', '4 4'], 22: ['920,1345 975,1278|942,1358 1005,1288', '13 5'] },
  c: `703,188,8 674,210,8 742,200,12 710,216,4 719,232,11 690,243,6 703,261,14 751,228,6 736,244,5 490,328,14 478,397,6 517,331,4 738,403,6 756,424,8 778,440,8 792,457,6 805,476,4 848,425,9 1030,580,8 1145,631,6 627,466,8 575,478,6 584,524,4 673,504,4 676,538,5 661,556,4 607,549,4 676,596,6 684,602,5 574,633,8 331,713,6 314,868,5 532,780,8 495,821,4 526,834,5 522,852,5 508,866,4 390,952,7 192,930,3 192,999,3 78,1043,4 587,1102,3 728,627,5 643,660,4 636,716,7 648,722,6 668,718,9 682,706,11 690,692,7 696,710,8 666,730,6 797,707,4 813,723,4 829,741,4 700,748,3 715,760,6 690,770,4 706,775,9 724,782,7 692,790,6 688,804,10 740,792,8 748,815,9 735,806,6 712,815,8 700,826,5 720,828,4 670,828,4 648,824,4 633,812,4 622,790,4 662,772,4 680,815,4 765,824,3 752,866,3 782,846,4 712,862,3 725,887,4 703,903,4 774,903,6 633,892,2 561,858,3 805,872,6 815,864,8 724,1154,6 742,1108,5 866,1078,5 882,830,8 895,800,4 905,810,5 912,822,4 870,815,8 950,820,11 915,850,12 972,840,18 985,852,8 1100,818,6 1105,720,12 1118,690,9 1132,705,9 1127,668,5 1213,682,7 1217,712,6 1235,716,3 1200,745,8 1061,1078,9 1108,1078,6 1105,1100,4 1366,1048,4 1350,855,12 1010,1300,9 1228,942,3 1407,1518,4 360,790,4 660,390,2 923,513,2 770,216,2 1385,858,7 965,785,8`,
  x: '<path d="M728 858L770 822M733 865L785 822M745 862L802 816" stroke="#5a5d8d" stroke-width="2" stroke-dasharray="9 3" fill="none"/><path d="M905 965l50-20 20 15M1000 965l45-40M1085 905l20 12M1255 1155v18M1242 1155v16M900 1325l80-52" stroke="#b7bdd6" stroke-width="1.500" fill="none"/>' },
 { t: 'translate(960 500) scale(.57398 .44643)',
  p: `112,36 138,36 132,60 122,78 107,70|203,50 221,64 216,84 232,92 236,100 218,116 210,100 212,92 190,94|158,36 175,36 168,58 155,48|474,248 503,206 549,262 540,286 508,245 487,265|438,302 452,325 470,322 490,355 486,380 470,388 456,408 438,402 424,375 427,345 398,350 420,318|343,402 368,378 396,378 394,408 370,432 350,425|335,427 357,455 345,478 318,475 308,489 300,470 320,455|317,490 375,492 388,520 378,545 350,535 330,520|376,430 400,416 420,440 415,475 395,475 380,450|290,496 325,548 290,595 262,578 245,590 232,565 260,525|520,360 563,420 553,442 530,425 500,405|565,518 583,497 602,520 592,535 612,533 632,560 608,592 588,570 595,555|555,565 566,560 580,580 590,600 575,618 550,582|375,578 395,560 412,595 440,600 412,636 385,608|284,610 300,585 316,605 292,634|322,590 332,580 345,605 352,580 362,592 365,620 390,655 375,680 360,672 345,650 328,620|443,635 485,575 515,570 528,605 505,625 490,655 470,674|648,650 665,627 682,645 665,668|183,625 205,610 214,630 198,644|235,715 255,705 268,683 282,695 300,705 298,735 270,752 255,735|410,668 436,700 410,736 382,708|330,692 340,680 352,700 342,715|305,740 318,720 332,738 317,755|341,748 352,733 366,750 352,765|415,757 430,738 447,760 432,780|442,728 458,706 476,730 460,752|472,785 480,745 535,680 562,715 548,745 488,792|575,735 600,706 640,765 600,818 575,780|485,820 515,793 580,895 572,910 535,880 505,850|95,782 138,735 148,745 146,760 120,775 118,790 130,800 155,770 168,772 120,824 100,805|235,965 328,896 340,910 255,1003|478,890 492,890 515,925 505,938 484,918|683,840 702,812 740,848 715,880|832,910 850,925 892,998 852,1046 825,1005 793,958|712,1115 745,1078 760,1095 795,1070 808,1085 775,1130 742,1158 715,1145|610,1105 630,1092 650,1130 632,1148|828,1135 855,1098 866,1115 860,1140 845,1163|457,1020 495,985 530,1028 505,1065 480,1078 458,1068 468,1045|505,1110 512,1085 550,1054 603,1132 560,1180 545,1186 520,1150|256,1192 316,1126 345,1160 340,1178 352,1178 368,1208 310,1272 285,1225|518,1384 550,1345 580,1384|197,1457 230,1425 235,1405 278,1368 308,1420 268,1475 232,1507|78,1470 108,1433 127,1455 96,1499|283,1545 320,1500 350,1455 380,1500 412,1550 412,1600 290,1600|1236,329 1248,312 1261,329 1249,346|802,712 815,702 826,732 815,732|646,1212 660,1190 670,1200 654,1217|655,1270 668,1262 678,1280 672,1295|525,980 542,960 558,985 545,1005|1482,590 1496,578 1503,588 1514,584 1508,602 1498,612 1485,604`,
  ring: ['350,1125 375,1100 378,1068 400,1080 438,1036 465,1072 465,1105 392,1188 370,1165/368,1125 382,1106 399,1130 383,1149', '378,1302 400,1278 392,1262 430,1240 440,1210 465,1202 485,1186 500,1220 530,1255 530,1275 545,1280 548,1300 570,1310 540,1350 515,1384 435,1384 420,1350/435,1298 465,1255 515,1330 487,1365'],
  l: { 12: '215,665 232,620|224,675 250,638|238,685 264,650|312,632 342,674|545,770 585,830|515,680 552,632|110,838 142,888|265,850 295,858 285,880|640,915 665,960|690,945 725,985|710,915 748,965|728,900 762,948|605,955 640,990 620,1025 655,1085 685,1050 705,1105|700,1030 735,995|700,1010 740,1070|760,1040 785,1085|680,1120 710,1165|700,770 720,735|442,920 452,950 475,962|515,930 520,955 535,965|640,812 655,790|632,800 662,820|405,985 430,955|408,962 428,985|725,800 740,772 752,788 735,818 722,800|745,835 760,808 772,828 757,855 745,835|648,875 668,845 680,862 662,892 646,875|678,905 692,882 706,905 690,926 678,905|165,740 182,710 202,728 185,752', 15: '125,80 190,148|190,157 216,112|232,150 252,115|192,200 214,165|447,38 474,76 438,130|468,153 505,92|470,38 500,50|485,485 530,440|462,515 488,550|412,545 440,548 465,572 440,605|582,632 590,655 610,672|580,665 600,632|622,675 650,708|648,745 705,690 690,668|635,700 620,715|178,822 212,880|148,870 185,838|150,905 198,862|212,840 232,800|225,857 262,812|250,780 278,818|755,905 785,865|780,935 810,900|560,690 570,672|930,835 965,860', 20: '468,458 508,418|500,525 548,468|395,505 440,468|660,548 688,592|165,962 195,925|225,925 248,900|420,800 455,845|660,975 690,940|795,850 825,890' },
  d: {},
  c: '103,85,5 452,500,12 366,484,6 543,550,16 692,611,5 305,657,10 384,737,9 352,793,12 388,790,13 490,692,14 330,838,16 355,875,13 388,918,12 455,888,12 605,860,13 628,832,10 228,1053,5 1110,588,5 980,874,12 718,376,3 964,934,3 862,930,5 563,688,11 688,776,3 642,1243,4 450,960,4 510,965,3',
  x: '<path d="M500 825l38 65M512 812l45 85M590 790l30-45M565 760l30 45M525 1110l20-35M520 1115l15 45 10 20M290 1230l45-55M520 470l12 20M505 450l20-25" stroke="#8c92c0" stroke-width="2.500" fill="none"/><path d="M470 625l32-24M462 648l22-12M495 630l12-16M345 615l6 14" stroke="#2b3a8c" stroke-width="4"/>' },
 { t: 'translate(980 1100) scale(.57398 .33333)',
  p: '248,280 265,215 295,210 318,148 348,205 380,280 380,320 348,340 325,385 290,350 272,305 250,300|85,430 95,380 125,368 150,353 165,375 160,420 176,465 155,490 140,526 120,490 90,475|235,552 262,580 290,560 312,558 300,600 275,640 255,600|0,742 0,735 20,722 25,742',
  l: { 18: '335,390 350,420|348,412 380,470', 22: '305,580 340,650|280,625 298,598', 16: '145,695 190,625', 13: '198,618 232,690' }, d: {}, c: '230,695,6 30,722,4 312,575,8 343,630,5', x: '<path d="M135 485l18-40M262 325l18-25" stroke="#fff" stroke-width="2" opacity=".5"/>' },
];
define('map-canvas', `:host{width:1541px;height:831px;background:#142a82;overflow:hidden}`, () => {
  const path = s => s.split('|').map(q => 'M' + q + 'z').join('');
  const line = s => s.split('|').map(q => 'M' + q).join('');
  /* large dots are drawn as small blocks turned to the street grid; storage tanks stay round */
  const dot = (x, y, r) => r < 8 || y < 270 ? `<circle cx="${x}" cy="${y}" r="${r}"/>`
    : `<path d="M${x - 1.15 * r} ${y + .15 * r}L${x - .1 * r} ${y - 1.15 * r}L${x + 1.15 * r} ${y - .15 * r}L${x + .1 * r} ${y + 1.15 * r}z"/>`;
  const g = MAP.map(m => `<g transform="${m.t}"><path stroke="#d3cbcb" stroke-width="3" stroke-linejoin="round" d="${path(m.p)}"/>` +
    (m.ring || []).map(r => `<path fill-rule="evenodd" stroke="#d3cbcb" stroke-width="3" stroke-linejoin="round" d="${path(r.replace('/', '|'))}"/>`).join('') +
    Object.entries(m.l).map(([w, s]) => `<path fill="none" stroke="#d3cbcb" stroke-width="${+w + 1}" d="${line(s)}"/>`).join('') +
    Object.entries(m.d).map(([w, [s, a]]) => `<path fill="none" stroke="#d3cbcb" stroke-width="${w}" stroke-dasharray="${a}" d="${line(s)}"/>`).join('') +
    m.c.split(' ').map(q => dot(...q.split(',').map(Number))).join('') + m.x + '</g>').join('');
  const pins = [[285, 542], [605, 755], [843, 974], [566, 1127], [294, 1185], [262, 1437]].map(([x, y]) =>
    `<circle cx="${960 + x * .574}" cy="${500 + y * .4464}" r="8.500" fill="#e8bd9a" stroke="#f8f2ec" stroke-width="2.200"/>`).join('');
  return `<svg width="1541" height="831" viewBox="298 516 1541 831"><g fill="#d3cbcb">${g}</g>${pins}</svg>`;
});

define('map-view', `:host{width:1557px;padding-left:14px;padding-top:17px}.t{display:flex;height:44px;align-items:center;padding-left:8px}
 .m{display:flex;align-items:center;width:147px;height:44px;background:#c2d9ea;border:2px solid #a9a9a9;border-bottom:0;padding-left:7px;margin-left:57px}
 .b{height:4px;background:#b9d7eb;width:1541px}.s{display:flex;align-items:center;height:49px;width:1557px;margin-left:-14px;padding-left:24px;border-bottom:2px solid #b5b5b5}
 .c{display:flex;align-items:center;width:199px;height:42px;border:2px solid #ababab;background:#fff;padding:0 6px 0 10px;justify-content:space-between}.v{width:2px;height:26px;background:#999}`,
 `<div class="t">${ic('docproj')}${sp(9)}${tx('Project', 73)}<div class="m">${ic('docmap')}${sp(9)}${tx('Map', 46)}${sp(25)}${ic('x', 'color:#444;transform:scale(.9)')}</div>${sp(1194)}${ic('dn', 'color:#555')}</div><div class="b"></div><map-canvas></map-canvas>
 <div class="s"><div class="c">${tx('1:22,607', 84)}${ic('dn', 'color:#666;transform:scale(.8)')}</div>${sp(10)}<i class="v"></i>${sp(13)}${ic('sb1')}${sp(13)}${ic('sb2')}${sp(13)}${ic('grid')}${sp(17)}<i class="v"></i>${sp(337)}${tx('96.33°W 30.62°N', 174)}</div>`);

/* ---------- project pane ---------- */
define('tree-row', `:host{display:flex;align-items:center;height:48px;flex:none;color:#4a4547}
 .a{flex:none;width:14px;display:flex;justify-content:center;margin-left:calc(27px + var(--l,0)*32px)}.i{flex:none;width:34px;display:flex;justify-content:center;margin-left:23px;margin-top:-3px}
 .t{margin-left:16px}
 :host([sel]){background:linear-gradient(#e3effa,#e3effa) 113px 1px/415px 44px no-repeat}`,
 el => { const a = el.getAttribute('a'); return `<div class="a">${a ? ic(a) : ''}</div><div class="i">${ic(el.getAttribute('n'))}</div><div class="t"><slot></slot></div>`; });
const ROWS = [[0, 'closed', 'fmap', 'Maps', 57], [0, 'closed', 'ftool', 'Toolboxes', 107], [0, 'opened', 'fdb', 'Databases', 105], [1, 'closed', 'gdbh', 'lab52.gdb', 103], [1, 'closed', 'gdb', 'Campus.gdb', 135], [1, 'opened', 'gdb', 'Lab5.gdb', 97], [2, '', 'poly', 'building_CCG_buffed_12', 259], [2, '', 'poly', 'clip_CCG', 95], [2, '', 'pts', 'garages', 82], [2, '', 'poly', 'Structures', 106], [1, 'closed', 'gdb', 'lab5_3333.gdb', 149], [0, 'closed', 'fgp', 'Geoprocessing History', 237], [0, 'closed', 'fsty', 'Styles', 59], [0, 'closed', 'ffold', 'Folders', 75]];
define('project-pane', `:host{width:575px;margin-left:11px;padding-top:17px}.f{border:2px solid #c9c9c9;border-top:6px solid #2a72b8;height:884px;background:#f7f9f8}
 .h{height:60px;padding-left:12px;font-size:34px;font-weight:300;color:#2777c2;margin-top:-1px}.n{height:46px;margin-top:32px;padding-left:16px;font-size:27px;font-weight:300}
 .n b{color:#2777c2;font-weight:600}.n u{width:2px;height:30px;background:#999}.q{height:50px;margin-top:12px;padding-left:14px}
 .e{flex:none;display:flex;align-items:center;width:448px;height:50px;border:2px solid #8c8c8c;background:#fff;padding:0 14px 0 10px;font-style:italic}
 .y{display:flex;margin-top:12px;height:662px}.w{width:537px;overflow:hidden;flex:none}
 .k{width:16px;display:flex;flex-direction:column;align-items:center;color:#8a8a8a}.k i{width:16px}.b{display:flex;height:46px;margin-top:-2px}
 .b div{display:flex;align-items:center;justify-content:center;height:44px;background:#e6e6e7;border:2px solid #c9c9c9;margin-left:-1px;flex:none}.b .z{background:#fff;color:#2777c2;border-top-color:#fff;height:48px;margin-left:0}`,
 `<div class="f"><div class="h r">${tx('Project', 103)}${sp(358)}${ic('dn', 'color:#777;transform:scale(1.15)')}${sp(18)}${ic('pin')}${sp(17)}${ic('x', 'color:#777')}</div>
 <div class="n r"><b>${tx('Project', 87)}</b>${sp(18)}<u></u>${sp(15)}${tx('Portal', 68)}${sp(19)}<u></u>${sp(15)}${tx('Notifications', 144)}${sp(138)}${ic('burger')}</div>
 <div class="q r">${ic('back')}${sp(13)}${ic('home')}${sp(14)}<div class="e">${tx('Search', 69)}${sp(299)}${ic('mag', 'color:#444')}${sp(16)}${ic('dn', 'color:#bbb;transform:scale(.8)')}</div></div>
 <div class="y"><div class="w">${ROWS.map(([l, a, n, t, w]) => `<tree-row n="${n}" a="${a}" ${t === 'Structures' ? 'sel' : ''} style="--l:${l}">${tx(t, w)}</tree-row>`).join('')}</div>
 <div class="k"><svg width="16" height="13" style="margin:0 0 5px"><path d="M0 13L8 0l8 13z" fill="#8a8a8a"/></svg><i style="height:567px;background:#8cb9dc"></i><i style="height:53px;background:#dfdfdf"></i><svg width="16" height="13" style="margin-top:6px"><path d="M0 0L8 13l8-13z" fill="#8a8a8a"/></svg></div></div></div>
 <div class="b"><div class="z" style="width:89px">${tx('Project', 69)}</div><div style="width:124px">${tx('Attributes', 101)}</div><div style="width:175px">${tx('Geoprocessing', 153)}</div></div>`);

define('arcgis-window', `:host{position:absolute;left:282px;top:165px;width:2160px;height:1246px;border:2px solid #2b7bd0;background:#f7f9f8;box-shadow:0 0 16px #0006}.d{display:flex}`,
 `<title-bar></title-bar><tab-strip></tab-strip><app-ribbon></app-ribbon><div class="d"><map-view></map-view><project-pane></project-pane></div>`);

/* ---------- file explorer ---------- */
define('explorer-window', `:host{position:absolute;left:989px;top:353px;width:1798px;height:1181px;background:#c5d4db;border:2px solid #6a7378;padding:0 14px 12px;display:flex;flex-direction:column;box-shadow:0 0 10px #0005}
 .c{align-self:flex-end;display:flex;height:42px;margin:0 -4px 17px 0;border:2px solid #5a6065;border-top:0;color:#000}.c div{display:flex;align-items:center;justify-content:center;border-left:2px solid #5a6065}.c div:first-child{border:0}
 .b{flex:1;background:#fff;border-top:1px solid #aab4ba;display:flex;flex-direction:column;align-items:flex-end}
 .r1{display:flex;align-items:center;height:48px;width:100%;justify-content:flex-end;padding:0 7px 2px 0;border-bottom:2px solid #dcdcdc;position:relative}
 .q{position:absolute;right:15px;top:10px;color:#fff;font-weight:700;font-size:24px}
 .s{display:flex;align-items:center;justify-content:flex-end;width:400px;height:46px;margin:12px 21px 0;border:2px solid #808080;padding-right:19px;color:#777}
 .g{width:300px;height:50px;margin:16px 264px 0 0;border:2px solid #e2e2e2;background:#fcfcfc}
 .k{display:flex;flex-direction:column;align-items:flex-end;margin:304px 279px 0 0;color:#6d6d6d;font-size:23px}.k div{height:42px;display:flex;align-items:center}
 .f{display:flex;align-items:center;width:100%;margin-top:auto;height:48px;padding-left:28px;color:#1e395b}.v{width:44px;height:46px;background:#cde6f7;border:2px solid #6aa6cd;display:flex;align-items:center;justify-content:center}`,
 `<div class="c"><div style="width:53px"><svg width="20" height="20"><path d="M0 12h20v6H0z"/></svg></div><div style="width:52px"><svg width="20" height="16"><path d="M2 2h16v12H2z" fill="none" stroke="#000" stroke-width="4"/></svg></div><div style="width:92px"><svg width="18" height="16"><path d="M2 1l14 14M16 1L2 15" stroke="#000" stroke-width="4.500"/></svg></div></div>
 <div class="b"><div class="r1">${ic('chev')}${sp(21)}${ic('help')}<span class="q">?</span></div><div class="s">${tx('05', 24)}${sp(244)}${ic('mag', 'color:#777;transform:scale(.95)')}${sp(2)}</div><div class="g"></div>
 <div class="k">${['1', '96', '20', '1', '7', '1', '3', '5'].map(t => `<div>${tx(t + ' KB', t.length > 1 ? 60 : 47)}</div>`).join('')}</div>
 <div class="f">${tx('15 items', 86)}${sp(1557)}<div class="v">${ic('list')}</div>${sp(8)}${ic('large')}</div></div>`);

define('item-tip', `:host{position:absolute;left:1196px;top:1118px;width:672px;height:386px;background:#fff;border:2px solid #c4c4c4;box-shadow:3px 3px 6px #0003;padding:32px 28px;color:#444;font-size:22px}
 .t{height:32px;display:flex;align-items:center;font-size:25px;color:#555}dl{display:grid;grid-template-columns:100px auto;margin:0;grid-auto-rows:26px;align-items:center;color:#444}dt{color:#777}dd{margin:0}.th{height:170px}`,
 `<div class="t">${tx('Structures', 124)}</div><dl style="margin-top:16px"><dt>${tx('Type:', 51)}</dt><dd>${tx('File Geodatabase Feature Class', 320)}</dd></dl>
 <div class="th"><svg width="600" height="170" style="transform:translate(2px,3px)"><g fill="#999" opacity=".8"><path d="M131 28h3l1 3h-3zM286 24l3 2-1 3-3-1zM294 54l2 3h-2zM222 58l4-2 1 4zM213 76l5 2-2 3zM329 117h3v2h-3z" opacity=".8"/><path d="M234 48l3 3 1 5-2-3zM247 46l3-4v8zM243 56l4-2 3 4-4 3-2 3zM248 62l4 1-2 5-3-3zM232 66l5-3-1 4zM250 73l4 3-3 3zM228 60l3 1v2zM255 50l2 4-3 1z" fill="#666"/></g><g fill="none" stroke="#bbb" stroke-width="1.300" stroke-dasharray="2 3"><path d="M230 47l12 17 14-2M248 40l3 14 6 8M232 68l14-8 7 16M240 44l4 12"/></g></svg></div>
 <dl><dt>${tx('Tags:', 51)}</dt><dd></dd><dt>${tx('Location:', 93)}</dt><dd>${tx('C:\\Users\\trejimmy5562\\Documents\\DevSource', 466)}</dd><dt></dt><dd>${tx('\\GISDev\\topic\\05\\Lab5.gdb\\Structures', 387)}</dd></dl>`);

/* ---------- taskbar ---------- */
define('task-bar', `:host{position:absolute;left:0;top:1720px;width:2880px;height:80px;display:flex;align-items:center;background:#7fc9e6;border-top:2px solid #5d8292;border-bottom:2px solid #4b4348;color:#0d1a22}
 .b{height:76px;display:flex;align-items:center;justify-content:center;border:1px solid #3b616f;border-width:0 2px;flex:none}.m{position:relative}.m span{position:absolute;left:6px;top:10px;font:700 16px "Liberation Mono",monospace;color:#eee;white-space:pre}
 .c{display:flex;flex-direction:column;align-items:center;width:118px;line-height:34px}`,
 sp(24) + ic('win') + sp(51) + ic('server') + sp(32) + `<div class="b" style="width:119px;background:#8ed2e9">${ic('files')}</div>` + sp(34) + ic('chromes') + sp(61) +
 `<div class="m">${ic('cmd')}<span>C:\\_</span></div>` + sp(35) + `<div class="b" style="width:119px;background:#add8f2">${ic('hex')}</div>` + sp(1822) + ic('up') + sp(26) + ic('flag') + sp(13) + ic('net') + sp(15) + ic('vol') + sp(26) +
 `<div class="c">${tx('9:27 PM', 84)}${tx('10/24/2019', 116)}</div>`);

define('desk-top', `:host{position:relative;width:2880px;height:1800px;overflow:hidden;background:#2e2e2e}
 .i{display:grid;grid-template-columns:148px 148px;grid-auto-rows:214px;padding-top:8px}.i :first-child{grid-column:1}.c1{grid-column:1}`,
 `<div class="i"><desk-icon n="bin">${tx('Recycle Bin', 118)}</desk-icon>
 <desk-icon class="c1" n="acro" link>${tx('Acrobat', 84)}${tx('Reader DC', 109)}</desk-icon>
 <desk-icon class="c1" n="chrome" link>${tx('Google', 76)}${tx('Chrome', 86)}</desk-icon>
 <desk-icon class="c1" n="github" link>${tx('GitHub', 75)}${tx('Desktop', 85)}</desk-icon>
 <desk-icon class="c1" n="vs" link>${tx('Visual Studio', 135)}${tx('Code', 56)}</desk-icon>
 <desk-icon class="c1" n="note">${tx('old sys path', 124)}</desk-icon><desk-icon n="zip">${tx('Lab4_data', 105)}</desk-icon></div>
 <explorer-window></explorer-window><arcgis-window></arcgis-window><item-tip></item-tip><task-bar></task-bar>`);

/* Spaces a label's letters so that it fills a given width. */
customElements.define('fit-text', class extends HTMLElement {
  connectedCallback() {
    if (this.shadowRoot) return;
    this.attachShadow({ mode: 'open' }).innerHTML = '<style>:host{display:inline-block;white-space:pre;flex:none}</style><slot></slot>';
    const w = +this.getAttribute('w'), s = document.createRange();
    s.selectNodeContents(this);
    const now = s.getBoundingClientRect().width;
    if (now) this.style.letterSpacing = ((w - now) / this.textContent.length).toFixed(3) + 'px';
    this.style.width = w + 'px';
  }
});
</script>
</body>
</html>
